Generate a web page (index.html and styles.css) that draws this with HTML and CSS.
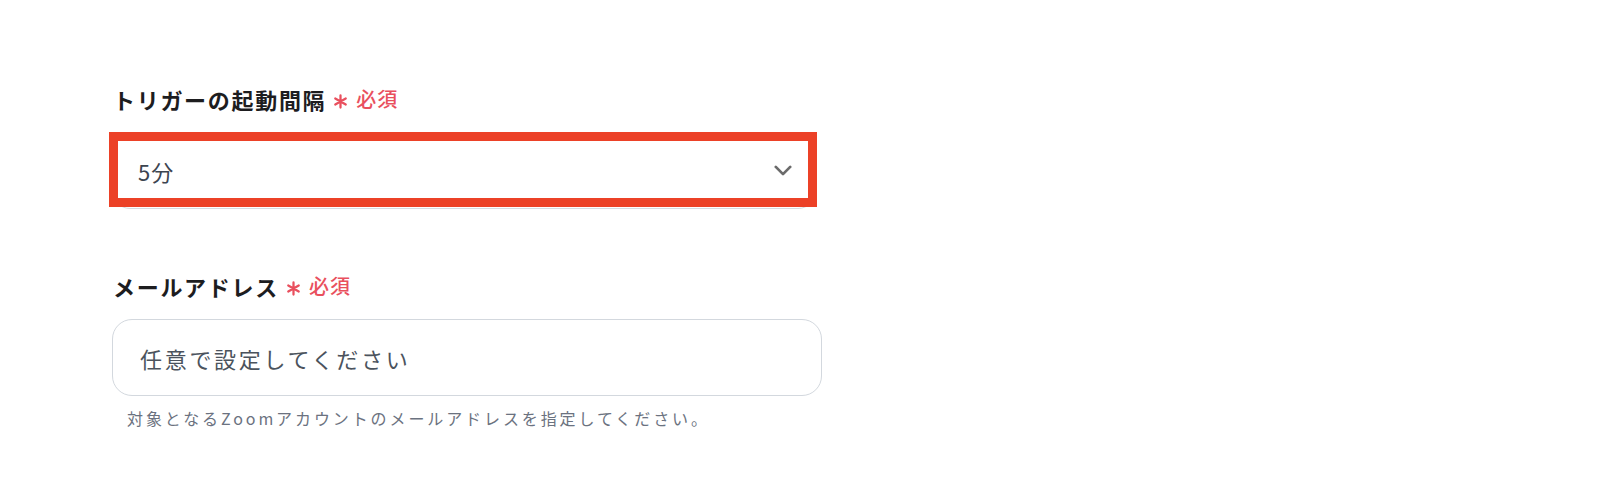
FILE: index.html
```html
<!DOCTYPE html>
<html lang="ja">
<head>
<meta charset="utf-8">
<title>トリガー設定</title>
<link rel="stylesheet" href="styles.css">
</head>
<body>
<main class="page">
  <section class="field">
    <div class="label">
      <span class="label-text">トリガーの起動間隔</span>
      <svg class="req-mark" viewBox="0 0 16 16" aria-hidden="true"><path d="M8 1.5v13M2.4 4.75l11.2 6.5M2.4 11.25l11.2-6.5" stroke="#e9505e" stroke-width="2.4" stroke-linecap="round"/></svg>
      <span class="req">必須</span>
    </div>
    <div class="select-wrap">
      <div class="select">
        <span class="value">5分</span>
        <svg class="chevron" viewBox="0 0 20 12" aria-hidden="true"><path d="M2 2l8 8 8-8" fill="none" stroke="#6b6b6b" stroke-width="3" stroke-linecap="round" stroke-linejoin="round"/></svg>
      </div>
      <div class="highlight"></div>
    </div>
  </section>

  <section class="field field-second">
    <div class="label">
      <span class="label-text">メールアドレス</span>
      <svg class="req-mark" viewBox="0 0 16 16" aria-hidden="true"><path d="M8 1.5v13M2.4 4.75l11.2 6.5M2.4 11.25l11.2-6.5" stroke="#e9505e" stroke-width="2.4" stroke-linecap="round"/></svg>
      <span class="req">必須</span>
    </div>
    <div class="input">
      <span class="placeholder">任意で設定してください</span>
    </div>
    <p class="help">対象となるZoomアカウントのメールアドレスを指定してください。</p>
  </section>
</main>
</body>
</html>
```

FILE: styles.css
```css
* { box-sizing: border-box; }

html, body {
  margin: 0;
  background: #ffffff;
}

body {
  font-family: "Noto Sans CJK JP", "Noto Sans", sans-serif;
  color: #1d1d1f;
}

.page {
  padding: 82px 0 0 112px;
  width: 822px;
}

.label {
  display: flex;
  align-items: center;
  height: 33px;
  padding-left: 1px;
}

.label-text {
  font-size: 22px;
  font-weight: 700;
  letter-spacing: 1.7px;
  color: #1d1d1f;
}

.req-mark {
  width: 15px;
  height: 15px;
  margin-left: 7px;
  margin-top: 5px;
}

.req {
  margin-left: 8px;
  font-size: 20px;
  font-weight: 500;
  color: #e9505e;
  letter-spacing: 1px;
}

.select-wrap {
  position: relative;
  margin-top: 17px;
  width: 704px;
}

.select {
  height: 77px;
  border: 1px solid #d6dbe1;
  border-radius: 18px;
  display: flex;
  align-items: center;
  justify-content: space-between;
  padding: 0 23px 0 25px;
}

.value {
  font-size: 22px;
  color: #3c4450;
  letter-spacing: 1px;
}

.chevron {
  width: 18px;
  height: 11px;
}

.highlight {
  position: absolute;
  left: -3px;
  top: 0;
  width: 708px;
  height: 75px;
  border: 9px solid #ec4127;
}

.field-second {
  margin-top: 60px;
}

.input {
  margin-top: 17px;
  height: 77px;
  border: 1.5px solid #d3d8de;
  border-radius: 20px;
  display: flex;
  align-items: center;
  padding-left: 27px;
}

.placeholder {
  font-size: 22px;
  color: #4b535d;
  letter-spacing: 2.7px;
}

.help {
  margin: 10px 0 0;
  padding-left: 15px;
  font-size: 16px;
  line-height: 24px;
  color: #6b7280;
  letter-spacing: 2.9px;
}
```
